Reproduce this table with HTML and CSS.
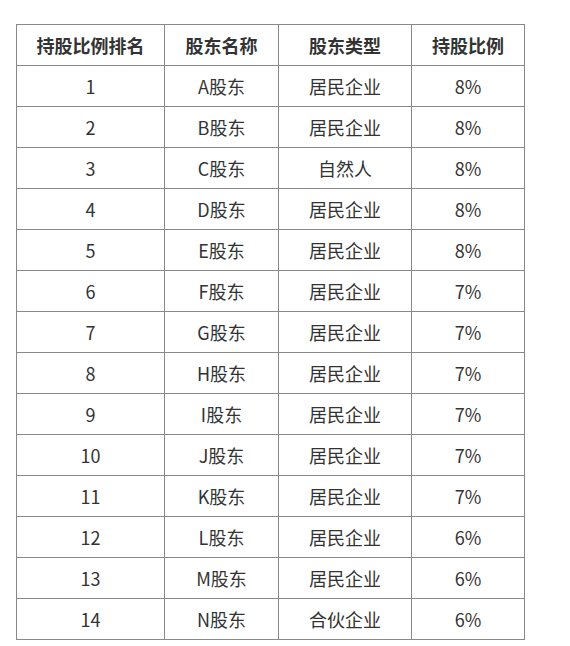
FILE: index.html
```html
<!DOCTYPE html>
<html lang="zh">
<head>
<meta charset="utf-8">
<link rel="stylesheet" href="styles.css">
</head>
<body>
<table class="holders">
  <colgroup>
    <col class="c1"><col class="c2"><col class="c3"><col class="c4">
  </colgroup>
  <thead>
    <tr><th>持股比例排名</th><th>股东名称</th><th>股东类型</th><th>持股比例</th></tr>
  </thead>
  <tbody>
    <tr><td>1</td><td>A股东</td><td>居民企业</td><td>8%</td></tr>
    <tr><td>2</td><td>B股东</td><td>居民企业</td><td>8%</td></tr>
    <tr><td>3</td><td>C股东</td><td>自然人</td><td>8%</td></tr>
    <tr><td>4</td><td>D股东</td><td>居民企业</td><td>8%</td></tr>
    <tr><td>5</td><td>E股东</td><td>居民企业</td><td>8%</td></tr>
    <tr><td>6</td><td>F股东</td><td>居民企业</td><td>7%</td></tr>
    <tr><td>7</td><td>G股东</td><td>居民企业</td><td>7%</td></tr>
    <tr><td>8</td><td>H股东</td><td>居民企业</td><td>7%</td></tr>
    <tr><td>9</td><td>I股东</td><td>居民企业</td><td>7%</td></tr>
    <tr><td>10</td><td>J股东</td><td>居民企业</td><td>7%</td></tr>
    <tr><td>11</td><td>K股东</td><td>居民企业</td><td>7%</td></tr>
    <tr><td>12</td><td>L股东</td><td>居民企业</td><td>6%</td></tr>
    <tr><td>13</td><td>M股东</td><td>居民企业</td><td>6%</td></tr>
    <tr><td>14</td><td>N股东</td><td>合伙企业</td><td>6%</td></tr>
  </tbody>
</table>
</body>
</html>
```

FILE: styles.css
```css
html, body {
  margin: 0;
  padding: 0;
  background: #fff;
}
body {
  padding: 24px 0 0 16px;
  font-family: "Noto Sans CJK SC", "Noto Sans", sans-serif;
  color: #333;
}
.holders {
  border-collapse: collapse;
  table-layout: fixed;
  width: 508px;
}
.c1 { width: 148px; }
.c2 { width: 114px; }
.c3 { width: 133px; }
.c4 { width: 113px; }
.holders th,
.holders td {
  border: 1px solid #888;
  height: 40px;
  padding: 0;
  box-sizing: border-box;
  text-align: center;
  vertical-align: middle;
  font-size: 18px;
  line-height: 24px;
}
.holders th {
  font-weight: bold;
}
.holders td {
  font-weight: normal;
}
.holders tr {
  height: 41px;
}
```
